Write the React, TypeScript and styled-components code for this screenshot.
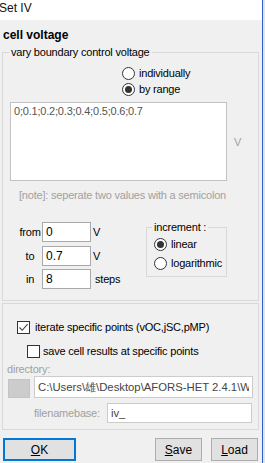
import React from "react";
import styled, { createGlobalStyle } from "styled-components";

const GlobalStyle = createGlobalStyle`
  html, body { margin: 0; padding: 0; background: #e4e4e4; }
  body {
    font-family: "Liberation Sans", Arial, sans-serif;
    font-size: 11px;
    color: #000;
  }
  * { box-sizing: border-box; }
`;

const Screen = styled.div`
  display: flex;
  width: 265px;
  height: 463px;
  overflow: hidden;
`;

const Window = styled.div`
  width: 263px;
  height: 463px;
  flex: none;
  border-right: 1px solid #2a62c9;
  background: #f0f0f0;
  display: flex;
  flex-direction: column;
`;

const Desk = styled.div`
  flex: 1;
  background: #e4e4e4;
`;

const TitleBar = styled.div`
  height: 20px;
  flex: none;
  background: #ffffff;
  font-size: 12px;
  line-height: 17px;
  color: #111;
  overflow: hidden;
`;

const TitleText = styled.span`
  display: inline-block;
  margin-left: -1px;
`;

const Body = styled.div`
  flex: 1;
  display: flex;
  flex-direction: column;
  padding: 8px 3px 0 2px;
  letter-spacing: -0.2px;
`;

const SectionTitle = styled.div`
  font-weight: bold;
  font-size: 12px;
  line-height: 14px;
  margin-left: 1px;
  letter-spacing: 0;
`;

const GroupBox = styled.fieldset<{ $pb: number }>`
  margin: 0;
  padding: 0 0 ${(p) => p.$pb}px 0;
  border: 1px solid #d9d9d9;
  min-width: 0;
`;

const MainGroup = styled(GroupBox)`
  margin-top: 3px;
`;

const Legend = styled.legend<{ $ml: number; $lh: number }>`
  margin-left: ${(p) => p.$ml}px;
  padding: 0 2px;
  line-height: ${(p) => p.$lh}px;
  font-size: 11px;
`;

const RadioList = styled.div<{ $mt: number; $pl: number; $rowH: number; $gap: number }>`
  display: flex;
  flex-direction: column;
  margin-top: ${(p) => p.$mt}px;
  padding-left: ${(p) => p.$pl}px;

  & > label {
    height: ${(p) => p.$rowH}px;
    gap: ${(p) => p.$gap}px;
  }
`;

const OptionRow = styled.label`
  display: flex;
  align-items: center;
  line-height: 13px;
`;

const RadioCircle = styled.span<{ $on?: boolean }>`
  width: 13px;
  height: 13px;
  flex: none;
  border: 1px solid #333;
  border-radius: 50%;
  background: #fff;
  display: flex;
  align-items: center;
  justify-content: center;

  &::after {
    content: "";
    width: 7px;
    height: 7px;
    border-radius: 50%;
    background: ${(p) => (p.$on ? "#333" : "transparent")};
  }
`;

const CheckBox = styled.span`
  width: 13px;
  height: 13px;
  flex: none;
  border: 1px solid #333;
  background: #fff;
  display: flex;
  align-items: center;
  justify-content: center;
`;

const TextRow = styled.div`
  display: flex;
  align-items: center;
  margin-top: 5px;
  padding-left: 7px;
`;

const ValuesArea = styled.textarea`
  width: 217px;
  height: 79px;
  border: 1px solid #c2c2c2;
  background: #fff;
  resize: none;
  padding: 2px 3px;
  font-family: "Liberation Sans", Arial, sans-serif;
  font-size: 11px;
  letter-spacing: -0.2px;
  line-height: 13px;
  color: #555;
  outline: none;
`;

const Unit = styled.span<{ $ml: number; $muted?: boolean }>`
  margin-left: ${(p) => p.$ml}px;
  color: ${(p) => (p.$muted ? "#a0a0a0" : "#000")};
`;

const Note = styled.div`
  margin-top: 8px;
  padding-left: 16px;
  line-height: 13px;
  color: #a0a0a0;
`;

const RangeArea = styled.div`
  display: flex;
  align-items: flex-start;
  margin-top: 20px;
  padding-left: 15px;
`;

const RangeGrid = styled.div`
  width: 128px;
  display: grid;
  grid-template-columns: 24px 49px auto;
  grid-auto-rows: 20px;
  row-gap: 3.5px;
  align-items: center;
`;

const RangeLabel = styled.span`
  text-align: center;
`;

const Field = styled.input<{ $w: number; $h: number; $muted?: boolean }>`
  width: ${(p) => p.$w}px;
  height: ${(p) => p.$h}px;
  border: 1px solid ${(p) => (p.$muted ? "#cccccc" : "#a9a9a9")};
  background: #fff;
  padding: 0 3px;
  font-family: "Liberation Sans", Arial, sans-serif;
  font-size: ${(p) => (p.$muted ? 11.3 : 12)}px;
  letter-spacing: 0;
  color: ${(p) => (p.$muted ? "#444" : "#000")};
  outline: none;
`;

const IncrementGroup = styled(GroupBox)`
  width: 81px;
  margin-top: -1px;
`;

const Panel = styled.div`
  margin-top: 2px;
  border: 1px solid #d9d9d9;
  padding: 0 0 6px 0;
  display: flex;
  flex-direction: column;
`;

const CheckRow = styled.label<{ $mt: number; $pl: number; $gap: number }>`
  display: flex;
  align-items: center;
  height: 16px;
  margin-top: ${(p) => p.$mt}px;
  padding-left: ${(p) => p.$pl}px;
  gap: ${(p) => p.$gap}px;
`;

const MutedLabel = styled.div`
  margin-top: 4px;
  padding-left: 4px;
  line-height: 13px;
  color: #a0a0a0;
`;

const DirRow = styled.div`
  display: flex;
  align-items: flex-end;
  padding-left: 5px;
`;

const BrowseSquare = styled.span`
  width: 22px;
  height: 19px;
  flex: none;
  background: #cccccc;
  border: 1px solid #c4c4c4;
  margin-right: 4px;
`;

const FileRow = styled.div`
  display: flex;
  align-items: center;
  margin-top: 5px;
  padding-left: 31px;
  gap: 7px;
  color: #a0a0a0;
`;

const ButtonRow = styled.div`
  display: flex;
  margin-top: 8px;
  padding: 0 1px 0 1px;
  letter-spacing: 0;
`;

const DlgButton = styled.button<{ $w: number; $focused?: boolean }>`
  width: ${(p) => p.$w}px;
  height: 23px;
  padding: 0;
  margin: 0;
  background: #e1e1e1;
  border: ${(p) => (p.$focused ? "2px solid #0078d7" : "1px solid #adadad")};
  font-family: "Liberation Sans", Arial, sans-serif;
  font-size: 12px;
  color: #000;
  line-height: 14px;
`;

const Spacer = styled.div`
  flex: 1;
`;

const Gap = styled.div<{ $w: number }>`
  width: ${(p) => p.$w}px;
  flex: none;
`;

function Radio({ on, label }: { on?: boolean; label: string }) {
  return (
    <OptionRow>
      <RadioCircle $on={on} />
      <span>{label}</span>
    </OptionRow>
  );
}

function CheckMark() {
  return (
    <svg width="11" height="11" viewBox="0 0 11 11">
      <path d="M1.5 5.5 L4.2 8.3 L9.6 2.2" fill="none" stroke="#444" strokeWidth="1.1" />
    </svg>
  );
}

export default function App() {
  return (
    <>
      <GlobalStyle />
      <Screen>
        <Window>
          <TitleBar>
            <TitleText>Set IV</TitleText>
          </TitleBar>
          <Body>
            <SectionTitle>cell voltage</SectionTitle>
            <MainGroup $pb={11}>
              <Legend $ml={6} $lh={14}>vary boundary control voltage</Legend>
              <RadioList $mt={6} $pl={119} $rowH={16} $gap={4}>
                <Radio label="individually" />
                <Radio on label="by range" />
              </RadioList>
              <TextRow>
                <ValuesArea readOnly value="0;0.1;0.2;0.3;0.4;0.5;0.6;0.7" />
                <Unit $ml={7} $muted>V</Unit>
              </TextRow>
              <Note>[note]: seperate two values with a semicolon</Note>
              <RangeArea>
                <RangeGrid>
                  <RangeLabel>from</RangeLabel>
                  <Field $w={49} $h={20} readOnly value="0" />
                  <Unit $ml={2}>V</Unit>
                  <RangeLabel>to</RangeLabel>
                  <Field $w={49} $h={20} readOnly value="0.7" />
                  <Unit $ml={2}>V</Unit>
                  <RangeLabel>in</RangeLabel>
                  <Field $w={49} $h={20} readOnly value="8" />
                  <Unit $ml={4}>steps</Unit>
                </RangeGrid>
                <IncrementGroup $pb={3}>
                  <Legend $ml={5} $lh={12}>increment :</Legend>
                  <RadioList $mt={2} $pl={7} $rowH={19} $gap={4}>
                    <Radio on label="linear" />
                    <Radio label="logarithmic" />
                  </RadioList>
                </IncrementGroup>
              </RangeArea>
            </MainGroup>
            <Panel>
              <CheckRow $mt={15} $pl={14} $gap={5}>
                <CheckBox>
                  <CheckMark />
                </CheckBox>
                <span>iterate specific points (vOC,jSC,pMP)</span>
              </CheckRow>
              <CheckRow $mt={8} $pl={24} $gap={3}>
                <CheckBox />
                <span>save cell results at specific points</span>
              </CheckRow>
              <MutedLabel>directory:</MutedLabel>
              <DirRow>
                <BrowseSquare />
                <Field $w={219} $h={22} $muted readOnly value="C:\Users\雄\Desktop\AFORS-HET 2.4.1\WORK" />
              </DirRow>
              <FileRow>
                <span>filenamebase:</span>
                <Field $w={145} $h={20} $muted readOnly value="iv_" />
              </FileRow>
            </Panel>
            <ButtonRow>
              <DlgButton $w={73} $focused>
                <u>O</u>K
              </DlgButton>
              <Spacer />
              <DlgButton $w={47}>
                <u>S</u>ave
              </DlgButton>
              <Gap $w={9} />
              <DlgButton $w={47}>
                <u>L</u>oad
              </DlgButton>
            </ButtonRow>
          </Body>
        </Window>
        <Desk />
      </Screen>
    </>
  );
}
